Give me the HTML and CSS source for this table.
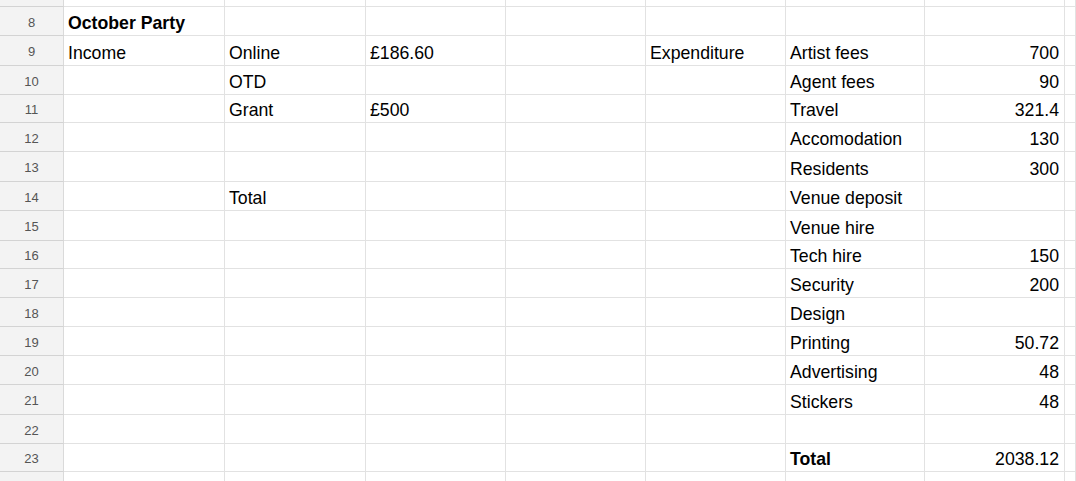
FILE: index.html
```html
<!DOCTYPE html>
<html>
<head>
<meta charset="utf-8">
<link rel="stylesheet" href="styles.css">
</head>
<body>
<div class="sheet">
  <div class="row top"><div class="rh"></div><div class="c"></div><div class="c"></div><div class="c"></div><div class="c"></div><div class="c"></div><div class="c"></div><div class="c"></div><div class="c"></div></div>
  <div class="row"><div class="rh">8</div><div class="c b">October Party</div><div class="c"></div><div class="c"></div><div class="c"></div><div class="c"></div><div class="c"></div><div class="c"></div><div class="c"></div></div>
  <div class="row r30"><div class="rh">9</div><div class="c">Income</div><div class="c">Online</div><div class="c">£186.60</div><div class="c"></div><div class="c">Expenditure</div><div class="c">Artist fees</div><div class="c n">700</div><div class="c"></div></div>
  <div class="row"><div class="rh">10</div><div class="c"></div><div class="c">OTD</div><div class="c"></div><div class="c"></div><div class="c"></div><div class="c">Agent fees</div><div class="c n">90</div><div class="c"></div></div>
  <div class="row r28"><div class="rh">11</div><div class="c"></div><div class="c">Grant</div><div class="c">£500</div><div class="c"></div><div class="c"></div><div class="c">Travel</div><div class="c n">321.4</div><div class="c"></div></div>
  <div class="row"><div class="rh">12</div><div class="c"></div><div class="c"></div><div class="c"></div><div class="c"></div><div class="c"></div><div class="c">Accomodation</div><div class="c n">130</div><div class="c"></div></div>
  <div class="row r30"><div class="rh">13</div><div class="c"></div><div class="c"></div><div class="c"></div><div class="c"></div><div class="c"></div><div class="c">Residents</div><div class="c n">300</div><div class="c"></div></div>
  <div class="row"><div class="rh">14</div><div class="c"></div><div class="c">Total</div><div class="c"></div><div class="c"></div><div class="c"></div><div class="c">Venue deposit</div><div class="c n"></div><div class="c"></div></div>
  <div class="row r30"><div class="rh">15</div><div class="c"></div><div class="c"></div><div class="c"></div><div class="c"></div><div class="c"></div><div class="c">Venue hire</div><div class="c n"></div><div class="c"></div></div>
  <div class="row r28"><div class="rh">16</div><div class="c"></div><div class="c"></div><div class="c"></div><div class="c"></div><div class="c"></div><div class="c">Tech hire</div><div class="c n">150</div><div class="c"></div></div>
  <div class="row"><div class="rh">17</div><div class="c"></div><div class="c"></div><div class="c"></div><div class="c"></div><div class="c"></div><div class="c">Security</div><div class="c n">200</div><div class="c"></div></div>
  <div class="row"><div class="rh">18</div><div class="c"></div><div class="c"></div><div class="c"></div><div class="c"></div><div class="c"></div><div class="c">Design</div><div class="c n"></div><div class="c"></div></div>
  <div class="row"><div class="rh">19</div><div class="c"></div><div class="c"></div><div class="c"></div><div class="c"></div><div class="c"></div><div class="c">Printing</div><div class="c n">50.72</div><div class="c"></div></div>
  <div class="row"><div class="rh">20</div><div class="c"></div><div class="c"></div><div class="c"></div><div class="c"></div><div class="c"></div><div class="c">Advertising</div><div class="c n">48</div><div class="c"></div></div>
  <div class="row r30"><div class="rh">21</div><div class="c"></div><div class="c"></div><div class="c"></div><div class="c"></div><div class="c"></div><div class="c">Stickers</div><div class="c n">48</div><div class="c"></div></div>
  <div class="row"><div class="rh">22</div><div class="c"></div><div class="c"></div><div class="c"></div><div class="c"></div><div class="c"></div><div class="c"></div><div class="c n"></div><div class="c"></div></div>
  <div class="row r28"><div class="rh">23</div><div class="c"></div><div class="c"></div><div class="c"></div><div class="c"></div><div class="c"></div><div class="c b">Total</div><div class="c n">2038.12</div><div class="c"></div></div>
  <div class="row"><div class="rh">24</div><div class="c"></div><div class="c"></div><div class="c"></div><div class="c"></div><div class="c"></div><div class="c"></div><div class="c"></div><div class="c"></div></div>
</div>
</body>
</html>
```

FILE: styles.css
```css
html, body {
  margin: 0;
  padding: 0;
  background: #ffffff;
}

.sheet {
  width: 1076px;
  height: 481px;
  overflow: hidden;
  font-family: "Liberation Sans", Arial, sans-serif;
  color: #000000;
}

.row {
  display: grid;
  grid-template-columns: 64px 161px 141px 140px 140px 140px 139px 140px 1fr;
  height: 29px;
  box-sizing: border-box;
}

.row.top {
  margin-top: -22px;
}

.row.r30 {
  height: 30px;
}

.row.r28 {
  height: 28px;
}

.rh {
  box-sizing: border-box;
  background: #f3f3f3;
  border-right: 1px solid #dadada;
  border-bottom: 1px solid #d3d3d3;
  color: #555555;
  font-size: 13px;
  display: flex;
  align-items: center;
  justify-content: center;
  padding-top: 2px;
}

.c {
  box-sizing: border-box;
  border-right: 1px solid #e2e2e2;
  border-bottom: 1px solid #e2e2e2;
  font-size: 17.7px;
  line-height: 20px;
  display: flex;
  align-items: flex-end;
  padding: 0 5px 2px 4px;
  white-space: nowrap;
  overflow: visible;
}

.c.b {
  font-weight: bold;
}

.c.n {
  justify-content: flex-end;
}
```
